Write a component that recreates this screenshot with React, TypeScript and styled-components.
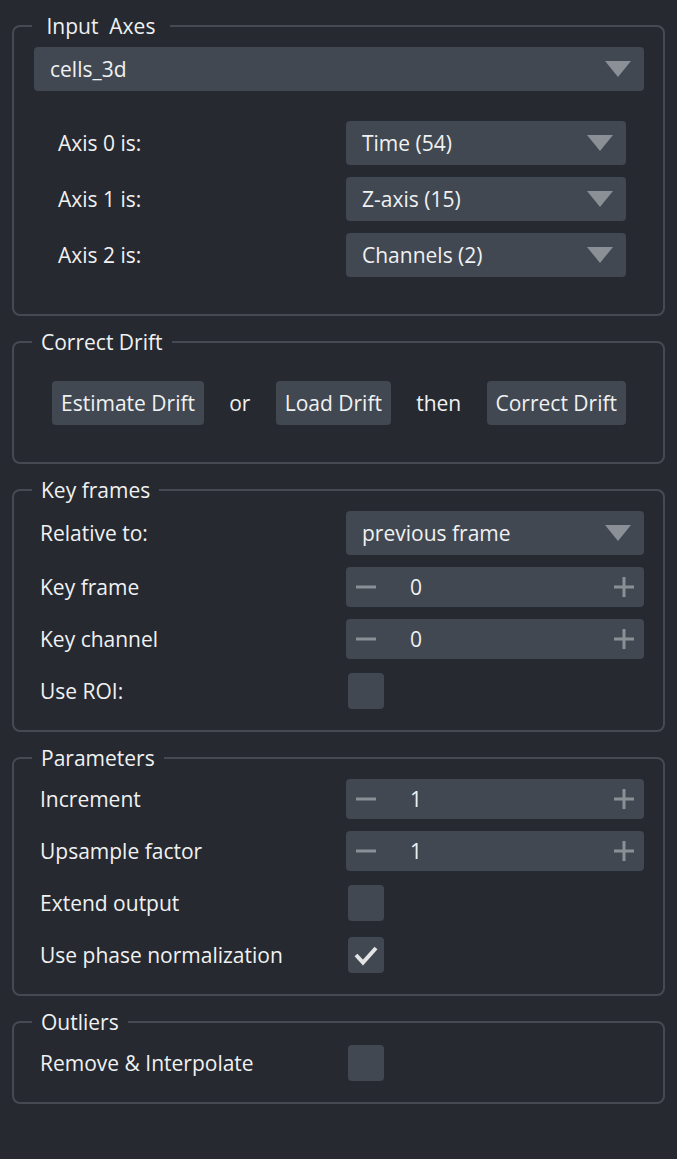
import React from "react";
import styled, { createGlobalStyle } from "styled-components";

const Global = createGlobalStyle`
  html, body { margin: 0; padding: 0; background: #262930; }
  body {
    font-family: "Open Sans", "Noto Sans", sans-serif;
    font-size: 21px;
    color: #f0f1f2;
  }
  * { box-sizing: border-box; }
`;

const Page = styled.div`
  width: 677px;
  min-height: 1159px;
  padding: 12px 12px 0 12px;
  display: flex;
  flex-direction: column;
  gap: 12px;
  background: #262930;
`;

const Group = styled.fieldset`
  margin: 0;
  border: 2px solid #454a53;
  border-radius: 8px;
  padding: 7px 19px 19px 20px;
  min-width: 0;
`;

const Legend = styled.legend`
  margin-left: -2px;
  padding: 0 9px;
  height: 28px;
  line-height: 28px;
  white-space: pre;
`;

const Form = styled.div<{ $inset?: boolean }>`
  display: grid;
  grid-template-columns: 1fr 1fr;
  column-gap: 14px;
  row-gap: 12px;
  align-items: center;
  padding: ${(p) => (p.$inset ? "18px" : "0")};
  margin-top: ${(p) => (p.$inset ? "12px" : "0")};
`;

const Label = styled.div`
  padding-left: 6px;
  line-height: 28px;
  white-space: nowrap;
`;

const Combo = styled.div`
  height: 44px;
  background: #414851;
  border-radius: 4px;
  display: flex;
  align-items: center;
  justify-content: space-between;
  padding: 0 13px 0 16px;
`;

const Arrow = styled.span`
  width: 0;
  height: 0;
  border-left: 13px solid transparent;
  border-right: 13px solid transparent;
  border-top: 16px solid #8b8f96;
`;

const Spin = styled.div`
  height: 40px;
  background: #414851;
  border-radius: 4px;
  display: flex;
  align-items: center;
`;

const SpinButton = styled.span`
  width: 40px;
  height: 40px;
  display: flex;
  align-items: center;
  justify-content: center;
  flex: none;
`;

const SpinValue = styled.span`
  flex: 1;
  padding-left: 24px;
`;

const CheckCell = styled.div`
  height: 40px;
  display: flex;
  align-items: center;
`;

const Check = styled.span`
  width: 36px;
  height: 36px;
  margin-left: 2px;
  border-radius: 4px;
  background: #414851;
  display: flex;
  align-items: center;
  justify-content: center;
`;

const ButtonRow = styled.div`
  display: flex;
  align-items: center;
  justify-content: space-between;
  padding: 18px;
`;

const Button = styled.span`
  height: 44px;
  padding: 0 9px;
  display: flex;
  align-items: center;
  background: #414851;
  border-radius: 4px;
  white-space: nowrap;
`;

const Word = styled.span`
  white-space: nowrap;
`;

const Minus = () => (
  <svg width="20" height="20" viewBox="0 0 20 20">
    <rect x="0" y="8.5" width="20" height="3" fill="#8b8f96" />
  </svg>
);

const Plus = () => (
  <svg width="20" height="20" viewBox="0 0 20 20">
    <rect x="0" y="8.5" width="20" height="3" fill="#8b8f96" />
    <rect x="8.5" y="0" width="3" height="20" fill="#8b8f96" />
  </svg>
);

const Tick = () => (
  <svg width="26" height="22" viewBox="0 0 26 22">
    <path d="M3 11 L10 18.5 L23 4" fill="none" stroke="#e4e4e4" strokeWidth="4" />
  </svg>
);

const ComboBox = ({ text }: { text: string }) => (
  <Combo>
    <span>{text}</span>
    <Arrow />
  </Combo>
);

const SpinBox = ({ value }: { value: string }) => (
  <Spin>
    <SpinButton>
      <Minus />
    </SpinButton>
    <SpinValue>{value}</SpinValue>
    <SpinButton>
      <Plus />
    </SpinButton>
  </Spin>
);

const CheckBox = ({ checked }: { checked?: boolean }) => (
  <CheckCell>
    <Check>{checked && <Tick />}</Check>
  </CheckCell>
);

export default function App() {
  return (
    <>
      <Global />
      <Page>
        <Group>
          <Legend>{" Input  Axes "}</Legend>
          <ComboBox text="cells_3d" />
          <Form $inset>
            <Label>Axis 0 is:</Label>
            <ComboBox text="Time (54)" />
            <Label>Axis 1 is:</Label>
            <ComboBox text="Z-axis (15)" />
            <Label>Axis 2 is:</Label>
            <ComboBox text="Channels (2)" />
          </Form>
        </Group>

        <Group>
          <Legend>Correct Drift</Legend>
          <ButtonRow>
            <Button>Estimate Drift</Button>
            <Word>or</Word>
            <Button>Load Drift</Button>
            <Word>then</Word>
            <Button>Correct Drift</Button>
          </ButtonRow>
        </Group>

        <Group>
          <Legend>Key frames</Legend>
          <Form>
            <Label>Relative to:</Label>
            <ComboBox text="previous frame" />
            <Label>Key frame</Label>
            <SpinBox value="0" />
            <Label>Key channel</Label>
            <SpinBox value="0" />
            <Label>Use ROI:</Label>
            <CheckBox />
          </Form>
        </Group>

        <Group>
          <Legend>Parameters</Legend>
          <Form>
            <Label>Increment</Label>
            <SpinBox value="1" />
            <Label>Upsample factor</Label>
            <SpinBox value="1" />
            <Label>Extend output</Label>
            <CheckBox />
            <Label>Use phase normalization</Label>
            <CheckBox checked />
          </Form>
        </Group>

        <Group>
          <Legend>Outliers</Legend>
          <Form>
            <Label>Remove &amp; Interpolate</Label>
            <CheckBox />
          </Form>
        </Group>
      </Page>
    </>
  );
}
